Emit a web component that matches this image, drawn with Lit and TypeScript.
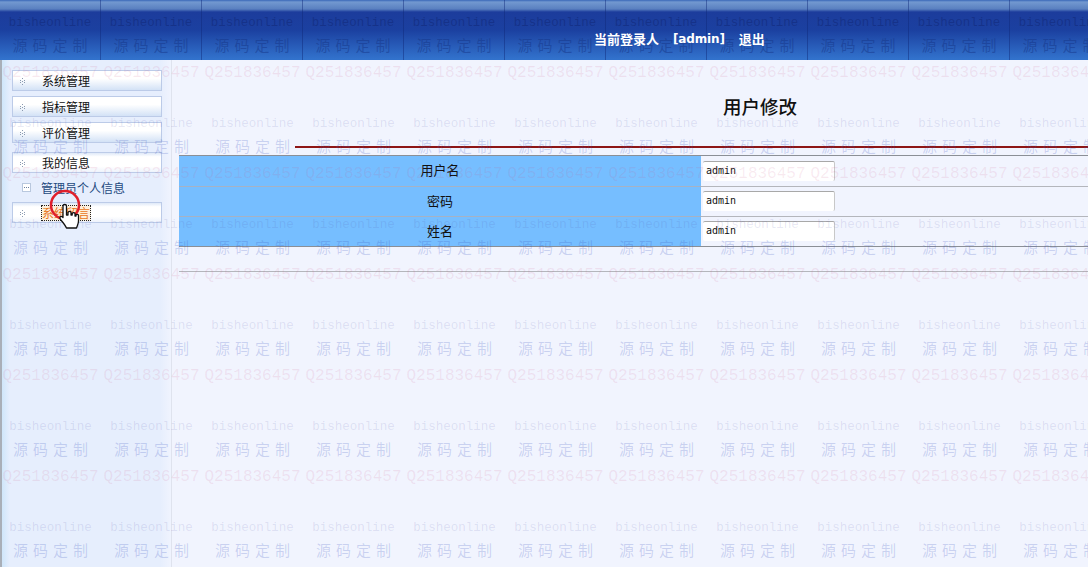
import { LitElement, html, css } from "lit";
import { customElement } from "lit/decorators.js";

const range = (n: number) => Array.from({ length: n }, (_, i) => i);

@customElement("app-root")
export class AppRoot extends LitElement {
  static styles = css`
    :host { display: block; position: relative; width: 100%; height: 100vh; overflow: hidden; background: #f1f4fe; font-family: "Noto Sans CJK SC", "Liberation Sans", sans-serif; font-size: 12px; color: #111; }
    .tile { width: 101px; height: 101px; flex: none; position: relative; box-sizing: border-box; display: flex; flex-direction: column; align-items: center; padding-top: 14px; overflow: hidden; }
    .w1 { font: 12.5px/18px "Liberation Mono", monospace; height: 18px; color: rgba(85, 85, 170, 0.14); }
    .w2 { font: 15px/20px "Noto Sans CJK SC", sans-serif; letter-spacing: 5px; padding-left: 5px; margin-top: 3px; height: 22px; color: rgba(60, 85, 190, 0.22); }
    .w3 { font: 16px/20px "Liberation Mono", monospace; margin-top: 6px; height: 20px; color: rgba(205, 80, 130, 0.12); }
    .overlay { position: absolute; left: 0; top: 0; width: 1212px; height: 606px; display: flex; flex-wrap: wrap; align-content: flex-start; pointer-events: none; z-index: 2; }
    header { position: relative; z-index: 3; height: 60px; overflow: hidden; display: flex; background: linear-gradient(#3a68b8 0, #7298d0 2px, #5a80c0 9px, #1c3c9c 12px, #1b40a0 30px, #3272cc 59px); }
    header .tile { border-right: 1px solid rgba(15, 40, 120, 0.45); }
    header .w1 { color: rgba(15, 35, 110, 0.45); }
    header .w2 { color: rgba(20, 50, 130, 0.45); }
    .user { position: absolute; left: 594px; top: 29px; display: flex; gap: 14px; color: #fff; font-weight: bold; font-size: 13px; line-height: 20px; white-space: nowrap; }
    .user .name { font-family: "DejaVu Sans", sans-serif; font-size: 12px; letter-spacing: -0.15px; }
    .page { display: flex; height: 507px; }
    aside { width: 172px; flex: none; box-sizing: border-box; padding: 10px 8px 0 10px; border-left: 2px solid #a9afb8; border-right: 1px solid #dfe3ee; background: linear-gradient(90deg, #cfe6fa 0, #e6eefd 8px, #e6eefd 158px, #eff3fe 168px); }
    .item { box-sizing: border-box; height: 21px; width: 150px; margin-bottom: 5px; display: flex; align-items: center; border: 1px solid #bccbe8; background: linear-gradient(#fff 0, #fff 40%, #d3e2f6 100%); padding-left: 29px; position: relative; line-height: 19px; white-space: nowrap; }
    .item.on { background: linear-gradient(#dfe9f8 0, #fff 20%, #fff 70%, #eef3fc 100%); margin-top: 9px; margin-bottom: 0; }
    .item.last { margin-top: 0; }
    .dots { position: absolute; left: 6px; top: 7px; }
    .sub { height: 29px; display: flex; align-items: center; gap: 10px; padding-left: 10px; color: #1e4a80; white-space: nowrap; }
    .box { width: 9px; height: 9px; border: 1px solid #b9c8de; background: #fff; box-sizing: border-box; flex: none; display: flex; align-items: center; justify-content: center; margin-top: -1px; }
    .box svg { display: block; }
    .sel { border: 1px dotted #222; background: #fdf0dc; color: #e8761a; line-height: 14px; margin-left: -1px; }
    main { flex: 1; min-width: 0; overflow: hidden; padding-left: 7px; }
    h1 { width: 930px; margin: 0 0 0 116px; padding-top: 32px; height: 54px; border-bottom: 2px solid #8e1616; text-align: center; font-size: 18.5px; line-height: 28px; font-weight: 500; color: #111; }
    .form { width: 1044px; margin-top: 7px; border-top: 1px solid #8b8f96; border-bottom: 1px solid #8b8f96; display: grid; grid-template-columns: 522px 522px; }
    .lab, .val { box-sizing: border-box; height: 30px; border-top: 1px solid #b4b6bc; display: flex; align-items: center; }
    .lab { border-top-color: #a6b2c4; }
    .first { border-top: none; }
    .lab { background: #76beff; justify-content: center; font-size: 13px; padding-bottom: 3px; }
    .val { padding-left: 2px; padding-bottom: 1px; }
    input { box-sizing: border-box; width: 132px; height: 20px; padding: 0 3px 2px; border: none; border-top: 1px solid #a8a8a8; border-right: 1px solid #c8c8c8; border-radius: 2px; background: #fff; font: 10px "DejaVu Sans Mono", monospace; color: #111; outline: none; }
    .rule { width: 1044px; height: 1px; margin-top: 24px; background: #b4b6bc; }
    .cursor { position: absolute; left: 48px; top: 188px; z-index: 4; pointer-events: none; }
  `;

  private tile() {
    return html`<div class="tile"><div class="w1">bisheonline</div><div class="w2">源码定制</div><div class="w3">Q251836457</div></div>`;
  }

  private dots() {
    return html`<svg class="dots" width="7" height="7" viewBox="0 0 7 7"><g fill="#8a9ab0"><rect x="3" y="0" width="1" height="1"/><rect x="1" y="2" width="1" height="1"/><rect x="5" y="2" width="1" height="1"/><rect x="3" y="3" width="1" height="1"/><rect x="1" y="4" width="1" height="1"/><rect x="5" y="4" width="1" height="1"/><rect x="3" y="6" width="1" height="1"/></g></svg>`;
  }

  render() {
    const rows = ["用户名", "密码", "姓名"];
    return html`
      <header>
        ${range(11).map(() => this.tile())}
        <div class="user"><span>当前登录人</span><span class="name">[admin]</span><span>退出</span></div>
      </header>
      <div class="page">
        <aside>
          <div class="item">${this.dots()}系统管理</div>
          <div class="item">${this.dots()}指标管理</div>
          <div class="item">${this.dots()}评价管理</div>
          <div class="item on">${this.dots()}我的信息</div>
          <div class="sub"><span class="box"><svg width="5" height="1"><g fill="#6c80a0"><rect x="0" width="1" height="1"/><rect x="2" width="1" height="1"/><rect x="4" width="1" height="1"/></g></svg></span>管理员个人信息</div>
          <div class="item on last">${this.dots()}<span class="sel">系统留言</span></div>
        </aside>
        <main>
          <h1>用户修改</h1>
          <div class="form">
            ${rows.map((r, i) => html`
              <div class="lab ${i === 0 ? "first" : ""}">${r}</div>
              <div class="val ${i === 0 ? "first" : ""}"><input value="admin" /></div>
            `)}
          </div>
          <div class="rule"></div>
        </main>
      </div>
      <div class="overlay">${range(72).map(() => this.tile())}</div>
      <svg class="cursor" width="36" height="44" viewBox="0 0 36 44">
        <circle cx="17" cy="17" r="14" fill="none" stroke="#e0202c" stroke-width="2.5"/>
        <path d="M15 18 C15 16 18.500 16 18.500 18 L18.500 27 L20 27 L20 24.500 C20.500 23 23 23 23 24.500 L23 27 L24.200 27 L24.200 25.500 C24.800 24.200 27 24.200 27 25.700 L27 28 L28 28 L28 27 C28.600 26 30.500 26 30.500 27.500 L30.500 33 C30.500 36 29 38 28.500 40 L18.500 40 C17.500 37.500 15 34.500 12.500 31.500 C11 29.500 12.500 27.500 14.500 29 L15 29.500 Z" fill="#fff" stroke="#111" stroke-width="1.3" stroke-linejoin="round"/>
      </svg>
    `;
  }
}
